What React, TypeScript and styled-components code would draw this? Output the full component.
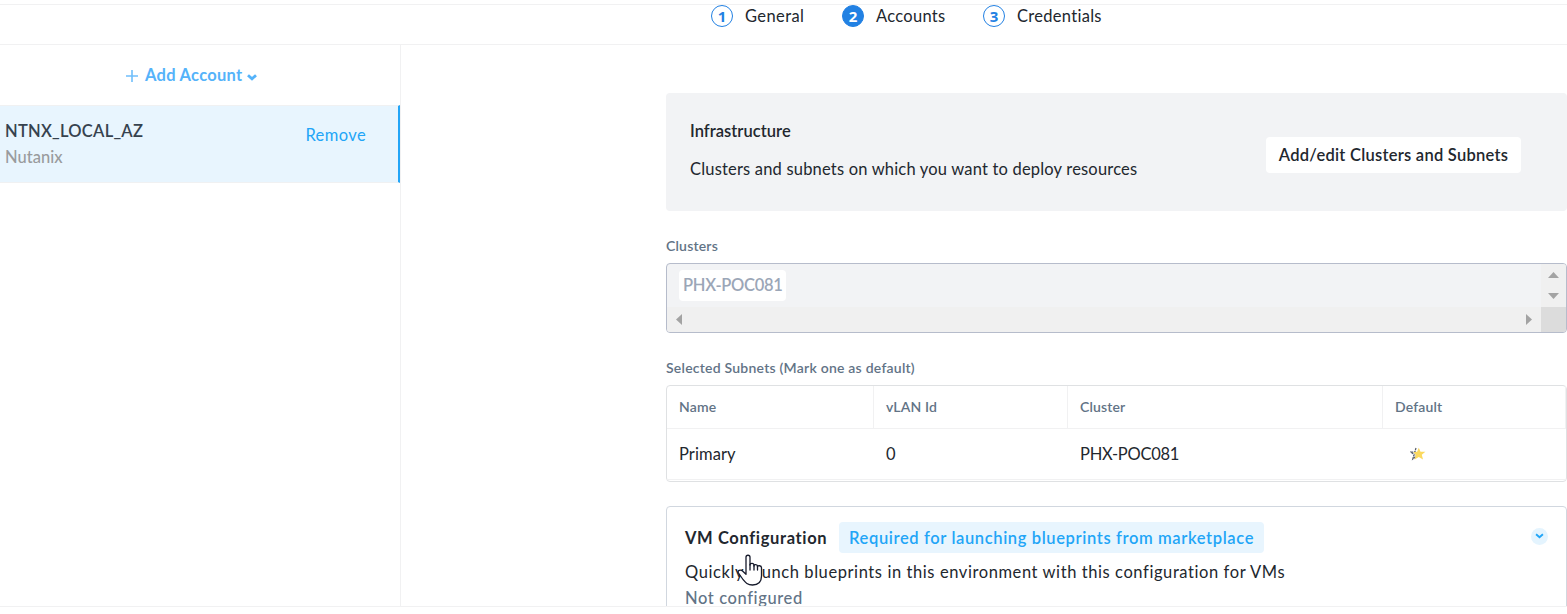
import React from 'react';
import styled, { createGlobalStyle } from 'styled-components';

const GlobalStyle = createGlobalStyle`
  * { box-sizing: border-box; }
  body {
    margin: 0;
    background: #fff;
    color: #22272e;
    font-family: Lato, sans-serif;
    font-size: 16.5px;
    overflow: hidden;
  }
`;

const Page = styled.div`
  display: flex;
  flex-direction: column;
  height: 614px;
  padding: 4px 0 7px;
`;

const Stepper = styled.nav`
  display: flex;
  flex: none;
  gap: 39px;
  height: 41px;
  padding-left: 711px;
  border-top: 1px solid #f1f1f2;
  border-bottom: 1px solid #f1f1f2;
`;

const Step = styled.div<{ $width: number }>`
  display: flex;
  gap: 12px;
  width: ${p => p.$width}px;
  height: 22px;
  line-height: 22px;
  white-space: nowrap;
`;

const StepNumber = styled.span<{ $active?: boolean }>`
  flex: none;
  width: 22px;
  height: 22px;
  border: 1px solid #2281e3;
  border-radius: 50%;
  background: ${p => (p.$active ? '#2281e3' : '#fff')};
  color: ${p => (p.$active ? '#fff' : '#2281e3')};
  font: 700 15px/20px "Open Sans", sans-serif;
  text-align: center;
`;

const Label = styled.span<{ $spacing?: number; $weight?: number }>`
  letter-spacing: ${p => p.$spacing ?? 0.3}px;
  font-weight: ${p => p.$weight ?? 400};
  white-space: nowrap;
`;

const Body = styled.div`
  display: flex;
  flex: 1;
  min-height: 0;
  border-bottom: 1px solid #f1f1f2;
`;

const Sidebar = styled.aside`
  flex: none;
  width: 401px;
  border-right: 1px solid #f1f1f2;
`;

const AddAccount = styled.button`
  display: flex;
  align-items: center;
  width: 100%;
  height: 60px;
  padding: 0 0 0 126px;
  border: 0;
  background: none;
  color: #55b3fa;
  font: inherit;
`;

const PlusIcon = styled.svg`
  margin: 2px 7px 0 0;
`;

const CaretIcon = styled.svg`
  margin: 5px 0 0 4px;
`;

const Account = styled.div`
  display: flex;
  justify-content: space-between;
  height: 78px;
  padding: 15px 32px 0 5px;
  border-top: 1px solid #f0f1f2;
  border-bottom: 1px solid #f0f1f2;
  border-right: 2px solid #22a5f7;
  background: #e8f5fe;
`;

const AccountText = styled.div`
  display: flex;
  flex-direction: column;
  color: #36424e;
  line-height: 20px;
`;

const Provider = styled(Label)`
  margin-top: 6px;
  color: #999b9d;
`;

const Remove = styled(Label)`
  margin-top: 4px;
  color: #22a5f7;
  line-height: 20px;
`;

const Main = styled.main`
  flex: 1;
  min-width: 0;
  padding: 48px 0 0 265px;
  overflow: hidden;
`;

const Infrastructure = styled.section`
  display: flex;
  align-items: center;
  justify-content: space-between;
  height: 118px;
  padding: 0 46px 0 24px;
  border-radius: 4px;
  background: #f2f3f5;
`;

const InfrastructureText = styled.div`
  display: flex;
  flex-direction: column;
  gap: 18px;
  margin-top: -5px;
  line-height: 20px;
`;

const EditButton = styled.button`
  width: 255px;
  height: 36px;
  margin-top: 6px;
  padding: 0;
  border: 0;
  border-radius: 4px;
  background: #fff;
  color: #22272e;
  font: inherit;
`;

const FieldLabel = styled.div<{ $spacing?: number }>`
  margin: 26px 0 8px;
  color: #627386;
  font-size: 14px;
  font-weight: 600;
  letter-spacing: ${p => p.$spacing ?? 0.2}px;
  line-height: 18px;
`;

const ClusterBox = styled.div`
  display: grid;
  grid-template: 43px 25px / 1fr 25px;
  height: 70px;
  border: 1px solid #b6bccb;
  border-radius: 4px;
  background: #f2f3f5;
  overflow: hidden;
`;

const ChipArea = styled.div`
  padding: 6px 12px;
`;

const Chip = styled.div`
  width: 107px;
  height: 31px;
  padding-left: 4px;
  border-radius: 4px;
  background: #fff;
  color: #9ba6b7;
  line-height: 31px;
`;

const VerticalScroll = styled.div`
  display: flex;
  flex-direction: column;
  align-items: center;
  justify-content: space-between;
  padding: 8px 0;
  background: #f0f0f0;
`;

const HorizontalScroll = styled.div`
  display: flex;
  align-items: center;
  justify-content: space-between;
  padding: 0 9px;
  background: #f0f0f0;
`;

const ScrollCorner = styled.div`
  background: #dcdcdc;
`;

const Table = styled.div`
  height: 97px;
  border: 1px solid #dfe1e3;
  border-radius: 4px;
`;

const TableRow = styled.div<{ $height: number }>`
  display: grid;
  grid-template-columns: 207px 194px 315px 1fr;
  height: ${p => p.$height}px;
  border-bottom: 1px solid #f1f1f2;
`;

const HeaderCell = styled.div`
  padding: 0 12px;
  border-right: 1px solid #f1f1f2;
  color: #627386;
  font-size: 14px;
  font-weight: 600;
  letter-spacing: 0.15px;
  line-height: 42px;
`;

const Cell = styled.div`
  padding: 0 12px;
  line-height: 51px;
`;

const StarIcon = styled.svg`
  display: block;
  margin: 18px 0 0 15px;
`;

const VmCard = styled.section`
  position: relative;
  height: 130px;
  margin-top: 24px;
  padding: 15px 18px;
  border: 1px solid #d1d7df;
  border-radius: 4px;
`;

const VmHeader = styled.div`
  display: flex;
  align-items: center;
  height: 31px;
`;

const Badge = styled.div`
  width: 425px;
  height: 31px;
  margin-left: auto;
  padding-left: 10px;
  border-radius: 4px;
  background: #e8f5fe;
  color: #22a5f7;
  line-height: 33px;
`;

const ExpandButton = styled.button`
  display: grid;
  place-items: center;
  width: 17px;
  height: 17px;
  margin: -3px 0 0 267px;
  padding: 0;
  border: 0;
  border-radius: 50%;
  background: #e4f4fe;
`;

const VmLine = styled.div<{ $muted?: boolean }>`
  height: 26px;
  padding-top: 6px;
  color: ${p => (p.$muted ? '#627386' : '#22272e')};
  line-height: 27px;
`;

const Pointer = styled.svg`
  position: absolute;
  top: 47px;
  left: 70px;
`;

const Chevron = ({ color }: { color: string }) => (
  <svg width="9" height="6" viewBox="0 0 10 7" fill="none" stroke={color} strokeWidth="2.2">
    <path d="M1 1.5 5 5 9 1.5" />
  </svg>
);

const arrows = {
  up: 'M0 6 5.5 0 11 6Z',
  down: 'M0 0 5.5 6 11 0Z',
  left: 'M6 0 0 5.5 6 11Z',
  right: 'M0 0 6 5.5 0 11Z',
};

const ScrollArrow = ({ direction }: { direction: keyof typeof arrows }) => {
  const vertical = direction === 'up' || direction === 'down';
  return (
    <svg width={vertical ? 11 : 6} height={vertical ? 6 : 11} fill="#a3a3a3">
      <path d={arrows[direction]} />
    </svg>
  );
};

export default function App() {
  return (
    <>
      <GlobalStyle />
      <Page>
        <Stepper>
          <Step $width={92}>
            <StepNumber>1</StepNumber>
            <Label $spacing={0.4}>General</Label>
          </Step>
          <Step $width={102}>
            <StepNumber $active>2</StepNumber>
            <Label>Accounts</Label>
          </Step>
          <Step $width={120}>
            <StepNumber>3</StepNumber>
            <Label>Credentials</Label>
          </Step>
        </Stepper>
        <Body>
          <Sidebar>
            <AddAccount>
              <PlusIcon width="12" height="12" fill="none" stroke="#70bffb" strokeWidth="1.6">
                <path d="M6 0V12M0 6H12" />
              </PlusIcon>
              <Label $spacing={0.28} $weight={700}>Add Account</Label>
              <CaretIcon width="10" height="7" fill="none" stroke="#55b3fa" strokeWidth="2.8">
                <path d="M1 1.2 5 4.8 9 1.2" />
              </CaretIcon>
            </AddAccount>
            <Account>
              <AccountText>
                <Label $spacing={0.26} $weight={600}>NTNX_LOCAL_AZ</Label>
                <Provider $spacing={0} $weight={500}>Nutanix</Provider>
              </AccountText>
              <Remove $spacing={0.4}>Remove</Remove>
            </Account>
          </Sidebar>
          <Main>
            <Infrastructure>
              <InfrastructureText>
                <Label $spacing={0.04} $weight={600}>Infrastructure</Label>
                <Label $spacing={0.185}>Clusters and subnets on which you want to deploy resources</Label>
              </InfrastructureText>
              <EditButton>
                <Label $spacing={0.26} $weight={600}>Add/edit Clusters and Subnets</Label>
              </EditButton>
            </Infrastructure>

            <FieldLabel>Clusters</FieldLabel>
            <ClusterBox>
              <ChipArea>
                <Chip><Label $spacing={-0.28} $weight={600}>PHX-POC081</Label></Chip>
              </ChipArea>
              <VerticalScroll>
                <ScrollArrow direction="up" />
                <ScrollArrow direction="down" />
              </VerticalScroll>
              <HorizontalScroll>
                <ScrollArrow direction="left" />
                <ScrollArrow direction="right" />
              </HorizontalScroll>
              <ScrollCorner />
            </ClusterBox>

            <FieldLabel $spacing={0.23}>Selected Subnets (Mark one as default)</FieldLabel>
            <Table>
              <TableRow $height={43}>
                <HeaderCell>Name</HeaderCell>
                <HeaderCell>vLAN Id</HeaderCell>
                <HeaderCell>Cluster</HeaderCell>
                <HeaderCell>Default</HeaderCell>
              </TableRow>
              <TableRow $height={51}>
                <Cell><Label $spacing={0.1}>Primary</Label></Cell>
                <Cell><Label>0</Label></Cell>
                <Cell><Label $spacing={-0.28}>PHX-POC081</Label></Cell>
                <Cell>
                  <StarIcon width="16" height="14" viewBox="0 0 16 14">
                    <path d="M6 1 4.8 5H.8L4 7.6 2.8 12 6 9.6" fill="#d9dce2" stroke="#555b68" strokeWidth="1.2" strokeDasharray="2.2 .8" />
                    <path d="M8.8.8 10.5 4.8H15.4L11.8 7.8 13 12.6 8.8 10 4.6 12.6 5.8 7.8 3.2 5.2 7.1 4.8Z" fill="#fbd95f" />
                  </StarIcon>
                </Cell>
              </TableRow>
            </Table>

            <VmCard>
              <VmHeader>
                <Label $spacing={0.64} $weight={700}>VM Configuration</Label>
                <Badge>
                  <Label $spacing={0.63} $weight={600}>Required for launching blueprints from marketplace</Label>
                </Badge>
                <ExpandButton><Chevron color="#22a5f7" /></ExpandButton>
              </VmHeader>
              <VmLine>
                <Label $spacing={0.585}>Quickly launch blueprints in this environment with this configuration for VMs</Label>
              </VmLine>
              <VmLine $muted>
                <Label $spacing={0.6} $weight={500}>Not configured</Label>
              </VmLine>
              <Pointer width="28" height="32" viewBox="0 0 28 32" fill="#fff" stroke="#161a2b" strokeWidth="1.3" strokeLinejoin="round" strokeLinecap="round">
                <path d="M9 18V3.2C9 .6 13 .6 13 3.2V11C13 8.6 17 8.8 17 11.2V12C17 9.8 20.5 10.2 20.5 12.4V13C20.5 11 24.5 11.4 24.5 13.8V22C24.5 28 21 31 15.5 31 10.5 31 8.5 28.5 6 25.5L1.5 19C0 16.4 3.4 15.2 5.8 17.2L9 20.2Z" />
                <path d="M13 10.5V16M17 11.5V16M20.5 12.5V16" />
              </Pointer>
            </VmCard>
          </Main>
        </Body>
      </Page>
    </>
  );
}
